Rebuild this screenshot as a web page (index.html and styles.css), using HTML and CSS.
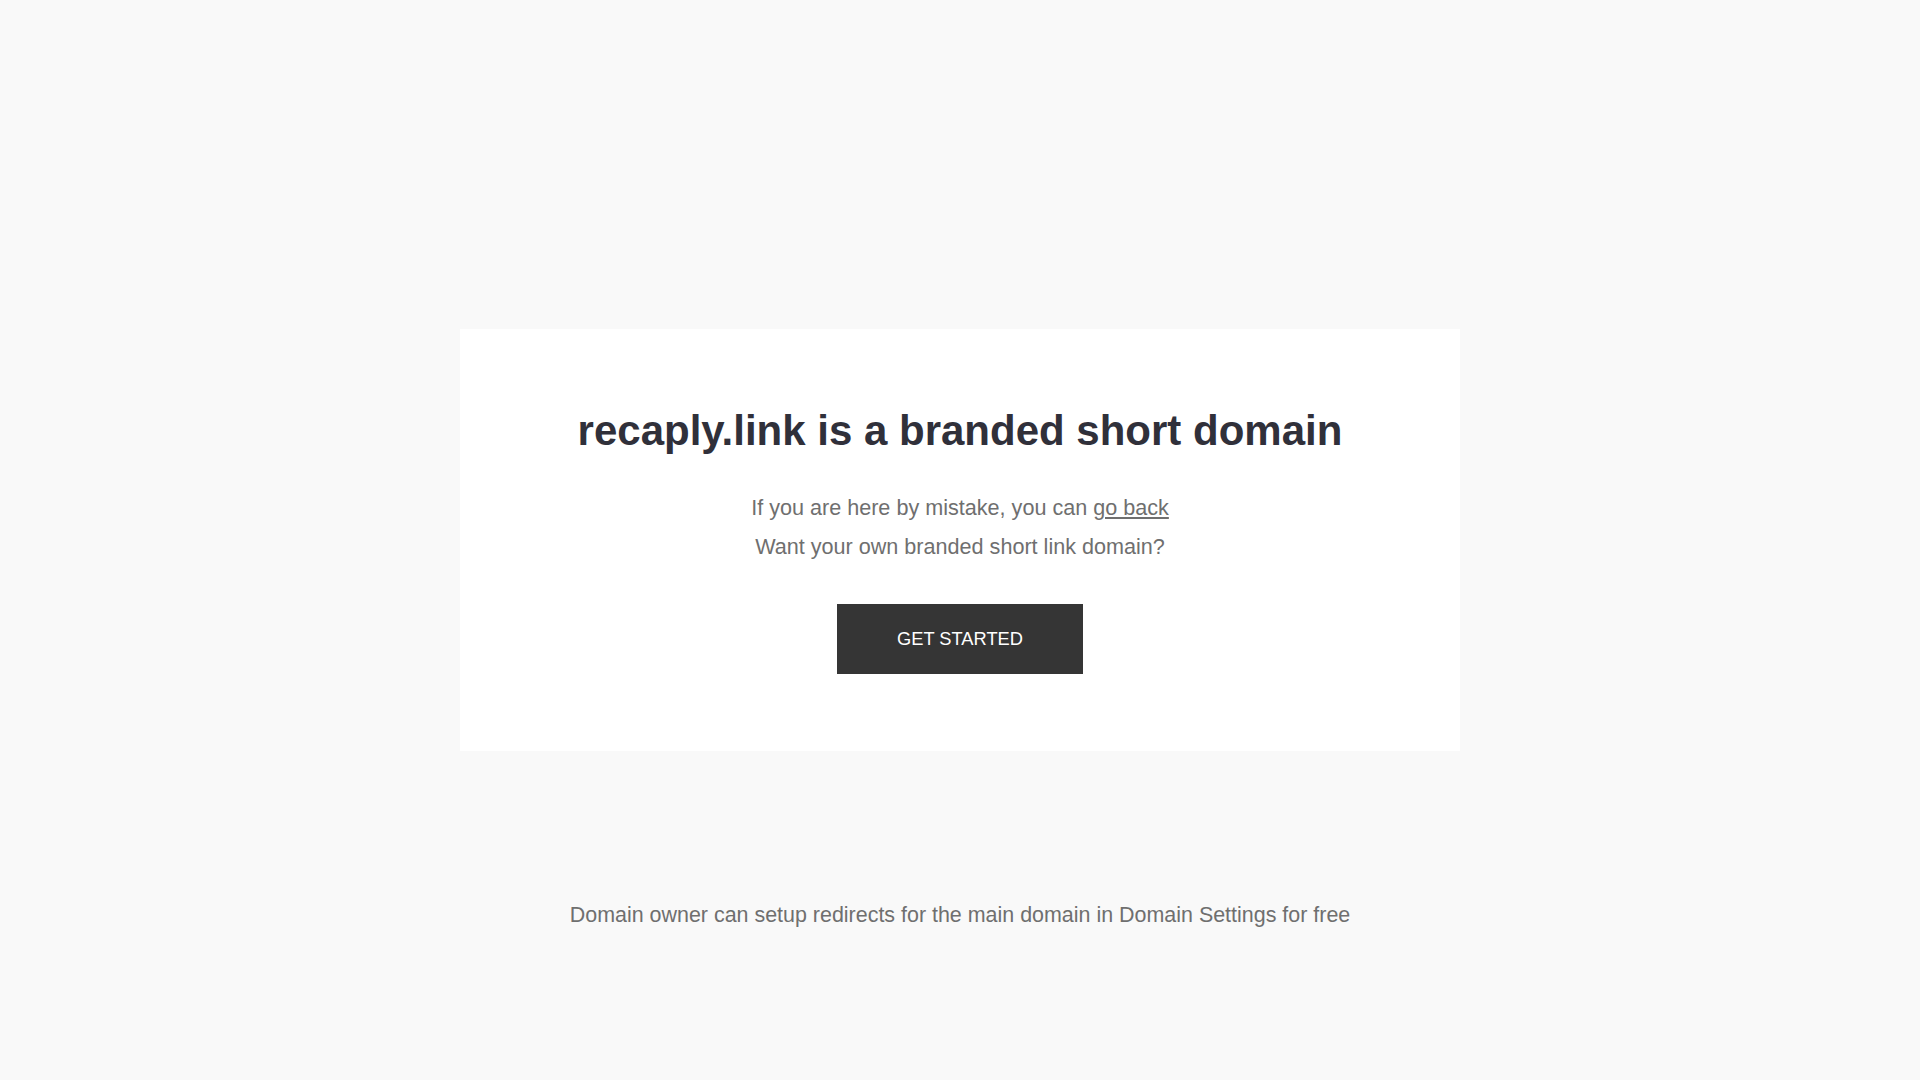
FILE: index.html
```html
<!DOCTYPE html>
<html lang="en">
<head>
<meta charset="utf-8">
<title>recaply.link is a branded short domain</title>
<link rel="stylesheet" href="styles.css">
</head>
<body>
<div class="page">
  <div class="spacer"></div>
  <main class="card">
    <h1 class="title">recaply.link is a branded short domain</h1>
    <div class="info">
      <p class="line">If you are here by mistake, you can <a class="back" href="#">go back</a></p>
      <p class="line">Want your own branded short link domain?</p>
    </div>
    <a class="button" href="#">GET STARTED</a>
  </main>
  <div class="bottom">
    <p class="footer">Domain owner can setup redirects for the main domain in Domain Settings for free</p>
  </div>
</div>
</body>
</html>
```
FILE: styles.css
```css
html, body {
  margin: 0;
  padding: 0;
}
body {
  background: #f9f9f9;
  font-family: "Liberation Sans", Arial, sans-serif;
  font-size: 18px;
}
.page {
  height: 100vh;
  display: grid;
  grid-template-rows: 1fr auto 1fr;
  justify-items: center;
}
.card {
  width: 1000px;
  box-sizing: border-box;
  background: #ffffff;
  padding: 77px 40px 77px;
  display: flex;
  flex-direction: column;
  align-items: center;
  text-align: center;
}
.title {
  margin: 0;
  font-size: 42px;
  line-height: 1.2;
  font-weight: bold;
  color: #30303a;
}
.info {
  margin-top: 33px;
}
.line {
  margin: 0;
  font-size: 21.6px;
  line-height: 1.8;
  color: #6f6f6f;
}
.back {
  color: #6f6f6f;
  text-decoration: underline;
}
.button {
  margin-top: 37px;
  width: 246px;
  height: 70px;
  display: flex;
  align-items: center;
  justify-content: center;
  background: #353535;
  color: #ffffff;
  font-size: 18.3px;
  text-decoration: none;
}
.bottom {
  align-self: start;
}
.footer {
  margin: 145px 0 0;
  font-size: 21.45px;
  line-height: 1.8;
  color: #6f6f6f;
  text-align: center;
}
```
